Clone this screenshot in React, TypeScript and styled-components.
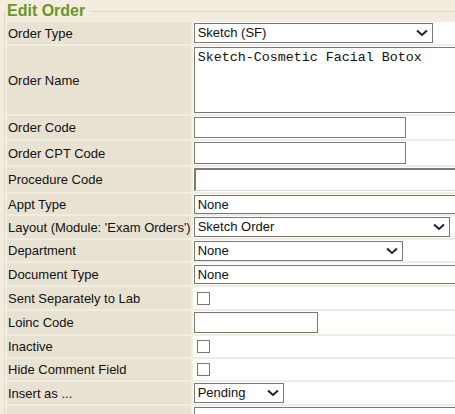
import styled, { createGlobalStyle } from 'styled-components';

const GlobalStyle = createGlobalStyle`
	html, body {
		margin: 0;
		padding: 0;
		background: #f4eddf;
		overflow: hidden;
	}
	body {
		font-family: 'Liberation Sans', Arial, sans-serif;
		font-size: 13px;
		color: #111;
	}
`;

const Page = styled.div`
	width: 455px;
	height: 414px;
	overflow: hidden;
	padding-top: 2px;
	box-sizing: border-box;
`;

const Frame = styled.fieldset`
	margin: 0 0 0 4px;
	padding: 0;
	border: 1px solid #ddd8cc;
	border-right: none;
	border-bottom: none;
	min-width: 0;
	width: 700px;
`;

const Legend = styled.legend`
	padding: 0 6px 0 2px;
	font-size: 16px;
	font-weight: 700;
	line-height: 18px;
	color: #6a961f;
`;

const Grid = styled.table`
	border-collapse: separate;
	border-spacing: 2px;
	margin: 0;
`;

const Row = styled.tr<{ $h: number }>`
	height: ${(p) => p.$h}px;
`;

const Label = styled.td`
	width: 180px;
	padding: 0 0 0 1px;
	background: #e8e2d3;
	vertical-align: middle;
	white-space: nowrap;
	line-height: 15px;
`;

const Value = styled.td`
	width: 500px;
	padding: 0 1px;
	background: #fff;
	vertical-align: middle;
`;

const TextBox = styled.div<{ $w: number; $h: number; $inset?: boolean }>`
	box-sizing: border-box;
	width: ${(p) => p.$w}px;
	height: ${(p) => p.$h}px;
	background: #fff;
	border: 1px solid #777;
	padding: 0 3px;
	line-height: ${(p) => p.$h - 2}px;
	${(p) =>
		p.$inset &&
		`
		border-top: 2px solid #7a7a7a;
		border-left: 2px solid #7a7a7a;
		border-right: 1px solid #d6d2c8;
		border-bottom: 1px solid #d6d2c8;
	`}
`;

const Dropdown = styled.div<{ $w: number }>`
	box-sizing: border-box;
	width: ${(p) => p.$w}px;
	height: 20px;
	border: 1px solid #777;
	background: #fff;
	display: flex;
	align-items: center;
	justify-content: space-between;
	padding: 0 4px 0 3px;
	line-height: 18px;

	svg {
		flex: none;
	}
`;

const Memo = styled.div`
	box-sizing: border-box;
	width: 300px;
	height: 66px;
	border: 1px solid #777;
	background: #fff;
	padding: 2px 3px;
	font-family: 'Liberation Mono', 'Courier New', monospace;
	font-size: 13.33px;
	line-height: 16px;
	white-space: pre;
`;

const Check = styled.span`
	display: block;
	box-sizing: border-box;
	width: 13px;
	height: 13px;
	margin-left: 3px;
	border: 1px solid #777;
	background: #fff;
`;

const Chevron = () => (
	<svg width='12' height='8' viewBox='0 0 12 8'>
		<path d='M1 1.5 L6 6 L11 1.5' fill='none' stroke='#222' strokeWidth='2' />
	</svg>
);

const Select = ({ w, text }: { w: number; text: string }) => (
	<Dropdown $w={w}>
		<span>{text}</span>
		<Chevron />
	</Dropdown>
);

type Field = { label: string; h: number; control: React.ReactNode };

const fields: Field[] = [
	{ label: 'Order Type', h: 22, control: <Select w={239} text='Sketch (SF)' /> },
	{ label: 'Order Name', h: 68, control: <Memo>Sketch-Cosmetic Facial Botox</Memo> },
	{ label: 'Order Code', h: 23, control: <TextBox $w={212} $h={21} /> },
	{ label: 'Order CPT Code', h: 24, control: <TextBox $w={212} $h={22} /> },
	{ label: 'Procedure Code', h: 25, control: <TextBox $w={300} $h={23} $inset /> },
	{ label: 'Appt Type', h: 20, control: <TextBox $w={300} $h={19}>None</TextBox> },
	{ label: "Layout (Module: 'Exam Orders')", h: 22, control: <Select w={256} text='Sketch Order' /> },
	{ label: 'Department', h: 21, control: <Select w={209} text='None' /> },
	{ label: 'Document Type', h: 22, control: <TextBox $w={300} $h={19}>None</TextBox> },
	{ label: 'Sent Separately to Lab', h: 22, control: <Check /> },
	{ label: 'Loinc Code', h: 23, control: <TextBox $w={124} $h={21} /> },
	{ label: 'Inactive', h: 21, control: <Check /> },
	{ label: 'Hide Comment Field', h: 21, control: <Check /> },
	{ label: 'Insert as ...', h: 22, control: <Select w={90} text='Pending' /> },
	{ label: '', h: 22, control: <TextBox $w={300} $h={21} /> },
];

const App = () => (
	<Page>
		<GlobalStyle />
		<Frame>
			<Legend>Edit Order</Legend>
			<Grid>
				<tbody>
					{fields.map((f, i) => (
						<Row key={i} $h={f.h}>
							<Label>{f.label}</Label>
							<Value>{f.control}</Value>
						</Row>
					))}
				</tbody>
			</Grid>
		</Frame>
	</Page>
);

export default App;
